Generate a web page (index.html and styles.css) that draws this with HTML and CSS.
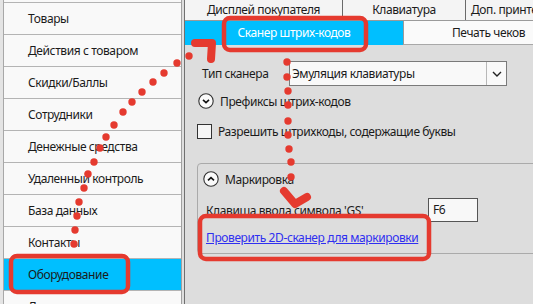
FILE: index.html
```html
<!DOCTYPE html>
<html lang="ru">
<head>
<meta charset="utf-8">
<link rel="stylesheet" href="styles.css">
</head>
<body>
<div class="app">
  <div class="strip"></div>
  <nav class="side">
    <div class="item">Товары</div>
    <div class="item">Действия с товаром</div>
    <div class="item">Скидки/Баллы</div>
    <div class="item">Сотрудники</div>
    <div class="item">Денежные средства</div>
    <div class="item">Удаленный контроль</div>
    <div class="item">База данных</div>
    <div class="item">Контакты</div>
    <div class="item selected">Оборудование</div>
    <div class="item">Дополнительно</div>
  </nav>
  <div class="gap"></div>
  <main class="panel">
    <div class="tabs1">
      <div class="tab t1">Дисплей покупателя</div>
      <div class="tab t2">Клавиатура</div>
      <div class="tab t3">Доп. принтер</div>
    </div>
    <div class="tabs2">
      <div class="tab2 active">Сканер штрих-кодов</div>
      <div class="tab2 rest">Печать чеков</div>
    </div>
    <div class="content">
      <div class="row scanner">
        <span class="label">Тип сканера</span>
        <div class="select">
          <span class="select-text">Эмуляция клавиатуры</span>
          <span class="select-btn">
            <svg width="10" height="6" viewBox="0 0 10 6"><path d="M1 1 L5 5 L9 1" fill="none" stroke="#222" stroke-width="1.4"/></svg>
          </span>
        </div>
      </div>
      <div class="row prefixes">
        <svg class="circ" width="16" height="16" viewBox="0 0 16 16"><circle cx="8" cy="8" r="7.2" fill="#fafafa" stroke="#333" stroke-width="1.1"/><path d="M5 6.8 L8 9.6 L11 6.8" fill="none" stroke="#111" stroke-width="1.6"/></svg>
        <span>Префиксы штрих-кодов</span>
      </div>
      <div class="row check">
        <span class="box"></span>
        <span>Разрешить штрихкоды, содержащие буквы</span>
      </div>
      <div class="group">
        <div class="row ghead">
          <svg class="circ" width="16" height="16" viewBox="0 0 16 16"><circle cx="8" cy="8" r="7.2" fill="#fafafa" stroke="#333" stroke-width="1.1"/><path d="M5 9.4 L8 6.6 L11 9.4" fill="none" stroke="#111" stroke-width="1.6"/></svg>
          <span>Маркировка</span>
        </div>
        <div class="row gskey">
          <span class="klabel">Клавиша ввода символа 'GS'</span>
          <span class="input">F6</span>
        </div>
        <a class="link" href="#">Проверить 2D-сканер для маркировки</a>
      </div>
    </div>
  </main>
  <svg class="overlay" width="533" height="304" viewBox="0 0 533 304">
    <g fill="#e53a2f">
      <circle cx="74" cy="244" r="3.7"/>
      <circle cx="75" cy="230" r="3.7"/>
      <circle cx="77" cy="216" r="3.7"/>
      <circle cx="79" cy="202" r="3.7"/>
      <circle cx="84" cy="188" r="3.7"/>
      <circle cx="88" cy="174" r="3.7"/>
      <circle cx="94" cy="162" r="3.7"/>
      <circle cx="100" cy="148" r="3.7"/>
      <circle cx="106" cy="137" r="3.7"/>
      <circle cx="114" cy="125" r="3.7"/>
      <circle cx="123" cy="112" r="3.7"/>
      <circle cx="132" cy="102" r="3.7"/>
      <circle cx="142" cy="92" r="3.7"/>
      <circle cx="153" cy="82" r="3.7"/>
      <circle cx="164" cy="73" r="3.7"/>
      <circle cx="177" cy="63" r="3.7"/>
      <circle cx="189" cy="56" r="3.7"/>
      <circle cx="287" cy="62" r="3.7"/>
      <circle cx="287" cy="77" r="3.7"/>
      <circle cx="288" cy="91" r="3.7"/>
      <circle cx="288" cy="105" r="3.7"/>
      <circle cx="288" cy="121" r="3.7"/>
      <circle cx="288" cy="135" r="3.7"/>
      <circle cx="289" cy="149" r="3.7"/>
      <circle cx="291" cy="162" r="3.7"/>
      <circle cx="291" cy="177" r="3.7"/>
    </g>
    <g fill="none" stroke="#e53a2f" stroke-linecap="round" stroke-linejoin="round">
      <path d="M195 43 L212 43 L211 59" stroke-width="8"/>
      <path d="M284 191 L295 204 L307 197" stroke-width="8"/>
      <rect x="11" y="256" width="117" height="36" rx="6" stroke-width="4.5"/>
      <rect x="224" y="18" width="142" height="32" rx="6" stroke-width="4.5"/>
      <rect x="200" y="216" width="229" height="43" rx="6" stroke-width="4.5"/>
    </g>
  </svg>
</div>
</body>
</html>
```
FILE: styles.css
```css
* { box-sizing: border-box; }
html, body { margin: 0; padding: 0; }
body {
  width: 533px;
  height: 304px;
  overflow: hidden;
  font-family: "Noto Sans", "Open Sans", sans-serif;
  font-size: 12px;
  letter-spacing: -0.4px;
  color: #1b1b1b;
  background: #dcdcdc;
}
.app {
  position: relative;
  display: flex;
  width: 533px;
  height: 304px;
  overflow: hidden;
}
.strip {
  width: 4px;
  flex: none;
  background: #e4e4e4;
  border-right: 1px solid #a8a8a8;
}
.side {
  width: 178px;
  flex: none;
  background: #f9f9f9;
  border-right: 1px solid #a0a0a0;
  padding-top: 2px;
}
.item {
  height: 32px;
  border-top: 1px solid #b4b4b4;
  padding-left: 24px;
  line-height: 31px;
  white-space: nowrap;
}
.item.selected {
  background: #00bfff;
}
.gap {
  width: 2px;
  flex: none;
  background: #dedede;
}
.panel {
  flex: 1;
  display: flex;
  flex-direction: column;
  border-left: 1px solid #707070;
  background: #dddddd;
  min-width: 0;
}
.tabs1 {
  display: flex;
  height: 21px;
  background: #f4f4f4;
  border-bottom: 1px solid #9a9a9a;
}
.tab {
  flex: none;
  text-align: center;
  line-height: 20px;
  white-space: nowrap;
  overflow: hidden;
}
.t1 { width: 158px; border-right: 1px solid #6a6a6a; }
.t2 { width: 123px; border-right: 1px solid #6a6a6a; }
.t3 { width: 120px; text-align: left; padding-left: 5px; }
.tabs2 {
  display: flex;
  height: 24px;
}
.tab2 {
  line-height: 24px;
  text-align: center;
  white-space: nowrap;
}
.tab2.active {
  width: 218px;
  background: #00bfff;
  color: #ffffff;
}
.tab2.rest {
  flex: 1;
  background: #fafafa;
  border-bottom: 1px solid #a8a8a8;
  border-left: 1px solid #9a9a9a;
  text-align: right;
  padding-right: 8px;
}
.content {
  flex: 1;
  display: flex;
  flex-direction: column;
}
.row {
  display: flex;
  align-items: center;
  white-space: nowrap;
}
.scanner {
  margin-top: 16px;
  padding-left: 17px;
  height: 25px;
}
.label { width: 87px; flex: none; }
.select {
  width: 218px;
  height: 25px;
  display: flex;
  align-items: center;
  background: #f9f9f9;
  border: 1px solid #7a7a7a;
}
.select-text { flex: 1; padding-left: 2px; }
.select-btn {
  width: 20px;
  height: 23px;
  display: flex;
  align-items: center;
  justify-content: center;
  border-left: 1px solid #b8b8b8;
}
.prefixes {
  margin-top: 7px;
  padding-left: 13px;
  height: 16px;
  gap: 6px;
}
.circ { flex: none; display: block; }
.check {
  margin-top: 15px;
  padding-left: 12px;
  height: 15px;
  gap: 6px;
}
.box {
  width: 15px;
  height: 15px;
  flex: none;
  background: #f6f6f6;
  border: 1px solid #333;
}
.group {
  margin-top: 24px;
  margin-left: 12px;
  margin-right: -10px;
  border: 1px solid #aaaaaa;
  border-radius: 4px;
  padding: 7px 8px 7px 5px;
  display: flex;
  flex-direction: column;
  align-items: flex-start;
}
.ghead {
  height: 16px;
  gap: 6px;
}
.gskey {
  margin-top: 11px;
  padding-left: 3px;
  height: 24px;
}
.klabel { width: 222px; flex: none; }
.input {
  width: 50px;
  height: 24px;
  background: #f8f8f8;
  border: 1px solid #555;
  padding-left: 4px;
  line-height: 22px;
}
.link {
  margin-top: 7px;
  margin-left: 3px;
  color: #2f2ff0;
  text-decoration: underline;
  line-height: 17px;
  white-space: nowrap;
}
.overlay {
  position: absolute;
  left: 0;
  top: 0;
  pointer-events: none;
}
```
